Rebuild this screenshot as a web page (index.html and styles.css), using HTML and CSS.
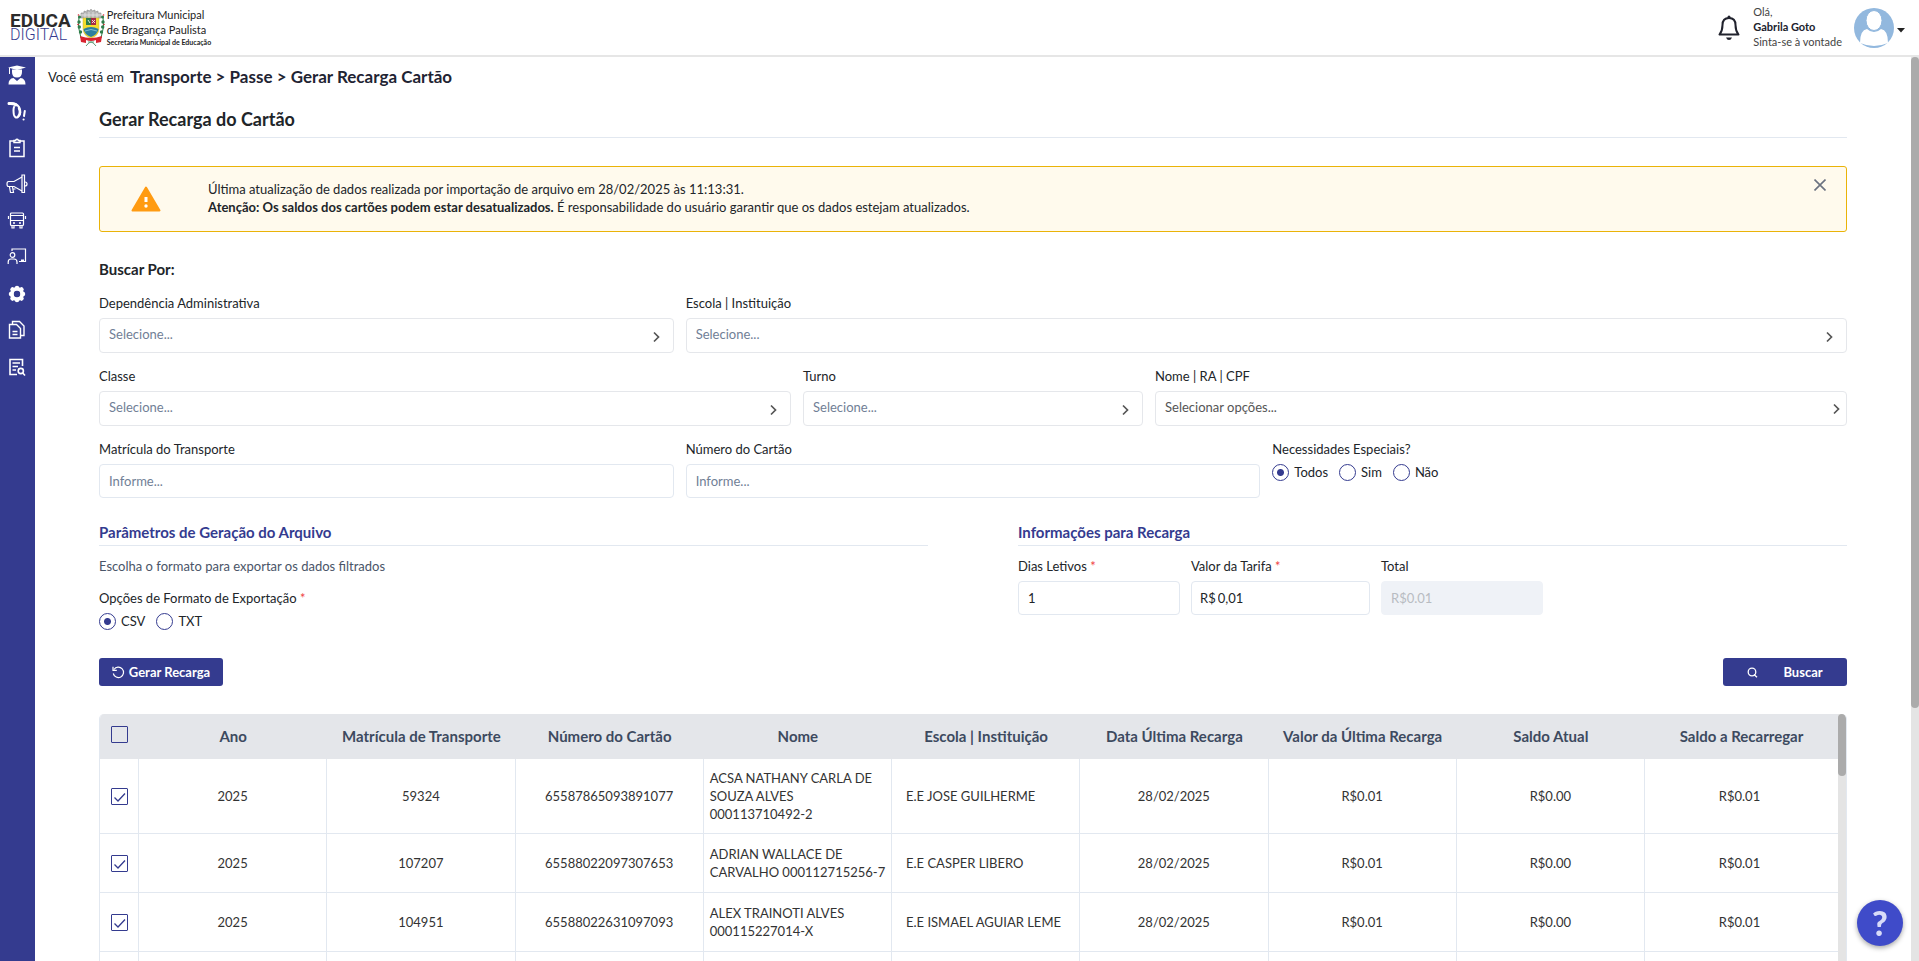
FILE: index.html
```html
<!DOCTYPE html>
<html lang="pt-BR">
<head>
  <meta charset="UTF-8">
  <title>Educa Digital - Gerar Recarga do Cartão</title>
  <meta name="viewport" content="width=device-width, initial-scale=1">
  <link rel="stylesheet" href="styles.css">
</head>
<body>
  <header class="topbar">
    <div class="brand">
      <div class="logo">
        <span class="logo-educa">EDUCA</span>
        <span class="logo-digital">DIGITAL</span>
      </div>
      <svg class="crest" width="28" height="38" viewBox="0 0 28 38" aria-hidden="true">
        <path d="M4 9 L4 4 L7 4 L7 2 L10 3 L10 1 L13 2 L14 0 L15 2 L18 1 L18 3 L21 2 L21 4 L24 4 L24 9 Z" fill="#b9b9b9" stroke="#8b8b8b" stroke-width=".6"/>
        <path d="M4 6 H24 M8 4 V9 M12 3 V9 M16 3 V9 M20 4 V9" stroke="#e4e4e4" stroke-width=".8"/>
        <path d="M2 7 Q0 18 4 29 M26 7 Q28 18 24 29" fill="none" stroke="#2f7d4a" stroke-width="1"/>
        <g fill="#2f7d4a"><circle cx="2.500" cy="8" r="1.500"/><circle cx="2" cy="13" r="1.700"/><circle cx="2.300" cy="18" r="1.700"/><circle cx="3.500" cy="23" r="1.700"/><circle cx="25.500" cy="8" r="1.500"/><circle cx="26" cy="13" r="1.700"/><circle cx="25.700" cy="18" r="1.700"/><circle cx="24.500" cy="23" r="1.700"/></g>
        <g fill="#d8232f"><circle cx="1.500" cy="6" r=".8"/><circle cx="1" cy="15.500" r=".8"/><circle cx="26.500" cy="6" r=".8"/><circle cx="27" cy="15.500" r=".8"/></g>
        <path d="M6 9 H22 V19 Q22 27 14 29 Q6 27 6 19 Z" fill="#f4dc2c" stroke="#c9b63a" stroke-width=".5"/>
        <path d="M9 9 H19 V16 H9 Z" fill="#2f7d4a"/>
        <path d="M14 9 H19 V16 H14 Z" fill="#a52a45"/>
        <path d="M11 11 l2 3 M15 11 l3 3 M18 11 l-3 3" stroke="#fff" stroke-width=".8"/>
        <path d="M6.500 20 Q14 16 21.500 20 Q21 25 14 28 Q7 25 6.500 20" fill="#2c7f9e"/>
        <path d="M8 22 Q14 19 20 22" fill="none" stroke="#7fc0d0" stroke-width="1"/>
        <path d="M3 27 Q14 31 25 27 L24 33 L19 34 L19 31 Q14 33 9 31 L9 34 L4 33 Z" fill="#d8232f"/>
        <path d="M9 37 Q12 33 14 33 Q16 33 19 37 M14 33 L11 33 M14 33 L17 33" fill="none" stroke="#5e9a77" stroke-width="1"/>
      </svg>
      <div class="brand-city">
        <span>Prefeitura Municipal</span>
        <span>de Bragança Paulista</span>
        <strong>Secretaria Municipal de Educação</strong>
      </div>
    </div>

    <div class="user">
      <button class="icon-btn" type="button" aria-label="Notificações">
        <svg width="24" height="26" viewBox="0 0 24 26">
          <path d="M12 3 C7.500 3 5.500 6 5.500 10 C5.500 15 4.500 17 2.500 19.500 H21.500 C19.500 17 18.500 15 18.500 10 C18.500 6 16.500 3 12 3 Z" fill="none" stroke="#20222d" stroke-width="2" stroke-linejoin="round"/>
          <path d="M10.500 3 V2 a1.500 1.500 0 0 1 3 0 V3 Z M9 22.500 H15 Q14 25 12 25 Q10 25 9 22.500" fill="#20222d"/>
        </svg>
      </button>
      <div class="user-text">
        <span>Olá,</span>
        <strong>Gabrila Goto</strong>
        <span>Sinta-se à vontade</span>
      </div>
      <button class="avatar-btn" type="button" aria-label="Menu do usuário">
        <svg width="40" height="40" viewBox="0 0 40 40">
          <circle cx="20" cy="20" r="20" fill="#92b8de"/>
          <path d="M6 35 Q6 22 13 21 Q16 24 20 24 Q24 24 27 21 Q34 22 34 35 Q27 38 20 38 Q13 38 6 35 Z" fill="#fff"/>
          <ellipse cx="20" cy="12.500" rx="8" ry="10" fill="#fff" stroke="#92b8de" stroke-width="1"/>
        </svg>
        <svg class="caret" width="8" height="5" viewBox="0 0 8 5"><path d="M0 0 H8 L4 4.500 Z" fill="#222"/></svg>
      </button>
    </div>
  </header>

  <div class="page">
    <nav class="sidebar" aria-label="Menu principal">
      <a href="#" aria-label="Alunos">
        <svg width="20" height="20" viewBox="0 0 20 20" fill="#fff"><path d="M10 .500 L19 2.500 L10 5 L1 2.500 Z"/><path d="M2 3 h1 v6 h-1 Z"/><path d="M5 4.500 H15 V7 Q15 12.500 10 12.500 Q5 12.500 5 7 Z"/><path d="M1.500 19.500 Q1.500 13.500 6.500 13 L10 16 L13.500 13 Q18.500 13.500 18.500 19.500 Z"/></svg>
      </a>
      <a href="#" aria-label="Avaliações">
        <svg width="20" height="20" viewBox="0 0 20 20" fill="none" stroke="#fff" stroke-linecap="round"><path d="M2 2.500 Q9 1 12 6 Q15 13 11 16 Q8 17.500 7 14 Q6 9 7 6" stroke-width="2"/><path d="M2 2.500 Q6 2 9 4" stroke-width="3"/><path d="M12 7 Q14 12 11.500 15" stroke-width="2.500"/><path d="M17.800 10 L17 15" stroke-width="2"/><path d="M16.500 18.500 h.1" stroke-width="2"/></svg>
      </a>
      <a href="#" aria-label="Registros">
        <svg width="20" height="20" viewBox="0 0 20 20" fill="none" stroke="#fff" stroke-width="1.500"><path d="M7 3 H3 V18.500 H17 V3 H13"/><path d="M7 4.500 V2.500 H8.500 Q10 .200 11.500 2.500 H13 V4.500 Z"/><path d="M7 9.500 H13 M7 13 H13"/></svg>
      </a>
      <a href="#" aria-label="Comunicados">
        <svg width="22" height="20" viewBox="0 0 22 20" fill="none" stroke="#fff" stroke-width="1.200"><path d="M16 3 L8 7.500 H2.500 Q1 7.500 1 10 Q1 12.500 2.500 12.500 H8 L16 17"/><path d="M16 1 H18.500 V18.500 H16 Z"/><path d="M19 8 Q21 8 21 10 Q21 12 19 12"/><path d="M3.500 13 L4.500 18.500 H7.500 L6.500 13 M7.500 15 H9.500"/></svg>
      </a>
      <a href="#" aria-label="Transporte">
        <svg width="20" height="18" viewBox="0 0 20 18" fill="none" stroke="#fff" stroke-width="1.200"><rect x="3.500" y="2" width="13" height="12.500" rx="1"/><path d="M3.500 4.500 H16.500 M3.500 9.500 H16.500 M1.500 5 V8 M18.500 5 V8 M5 15 V17 H7 V15 M13 15 V17 H15 V15"/><path d="M6 12 H8 M12 12 H14" stroke-width="1.600"/></svg>
      </a>
      <a href="#" aria-label="Professores">
        <svg width="20" height="18" viewBox="0 0 20 18" fill="none" stroke="#fff" stroke-width="1.200"><path d="M5 4 V2 H18.500 V14.500 H12"/><circle cx="5.500" cy="8" r="2.300"/><path d="M1.200 17 V15 Q1.200 12 4 12 H7 Q10 12 10 15 V17"/><path d="M14 13.500 H17" stroke-width="2"/></svg>
      </a>
      <a href="#" aria-label="Configurações">
        <svg width="20" height="20" viewBox="0 0 20 20"><circle cx="10" cy="10" r="5" fill="none" stroke="#fff" stroke-width="4"/><g stroke="#fff" stroke-width="4.500" stroke-linecap="round"><path d="M10 4 V4.500 M10 15.500 V16 M4 10 H4.500 M15.500 10 H16 M5.500 5.500 L6 6 M14 14 L14.500 14.500 M5.500 14.500 L6 14 M14 6 L14.500 5.500"/></g><circle cx="10" cy="10" r="3.200" fill="#343b8f"/></svg>
      </a>
      <a href="#" aria-label="Documentos">
        <svg width="20" height="20" viewBox="0 0 20 20" fill="none" stroke="#fff" stroke-width="1.400"><path d="M2.500 4.500 H9.500 L13.500 8.500 V18 H2.500 Z"/><path d="M5.500 4 V1.500 H12.500 L17 6 V15.500 H14"/><path d="M5.500 11.500 H10.500 M5.500 14.500 H10.500"/></svg>
      </a>
      <a href="#" aria-label="Relatórios">
        <svg width="20" height="20" viewBox="0 0 20 20" fill="none" stroke="#fff" stroke-width="1.600"><path d="M10 17.500 H3 V2.500 H15.500 V9"/><path d="M5.500 6 H13 M5.500 9.500 H11 M5.500 13 H9"/><circle cx="13.800" cy="14" r="2.600"/><path d="M15.800 16 L18 18.500"/></svg>
      </a>
    </nav>

    <main class="main">
      <div class="breadcrumb">
        <span>Você está em</span>
        <strong>Transporte &gt; Passe &gt; Gerar Recarga Cartão</strong>
      </div>

      <div class="content">
        <h1 class="title">Gerar Recarga do Cartão</h1>

        <div class="alert">
          <svg class="alert-icon" width="30" height="26" viewBox="0 0 30 26" aria-hidden="true">
            <path d="M15 1.500 L28.500 24.500 H1.500 Z" fill="#ff9b12" stroke="#ff9b12" stroke-width="2" stroke-linejoin="round"/>
            <path d="M15 11 V16" stroke="#fff" stroke-width="3"/><circle cx="15" cy="20" r="1.700" fill="#fff"/>
          </svg>
          <p class="alert-text">Última atualização de dados realizada por importação de arquivo em 28/02/2025 às 11:13:31.<br>
            <strong>Atenção: Os saldos dos cartões podem estar desatualizados.</strong> É responsabilidade do usuário garantir que os dados estejam atualizados.</p>
          <button class="alert-close" type="button" aria-label="Fechar">
            <svg width="12" height="12" viewBox="0 0 12 12"><path d="M.500 .500 L11.500 11.500 M11.500 .500 L.500 11.500" stroke="#6b7280" stroke-width="1.600"/></svg>
          </button>
        </div>

        <form>
          <h2 class="subtitle">Buscar Por:</h2>

          <div class="row row-3">
            <div class="field">
              <label for="dependencia">Dependência Administrativa</label>
              <select id="dependencia"><option>Selecione...</option></select>
            </div>
            <div class="field span-2">
              <label for="escola">Escola | Instituição</label>
              <select id="escola"><option>Selecione...</option></select>
            </div>
          </div>

          <div class="row row-5">
            <div class="field span-2">
              <label for="classe">Classe</label>
              <select id="classe"><option>Selecione...</option></select>
            </div>
            <div class="field">
              <label for="turno">Turno</label>
              <select id="turno"><option>Selecione...</option></select>
            </div>
            <div class="field span-2">
              <label for="nome">Nome | RA | CPF</label>
              <select id="nome" class="multi"><option>Selecionar opções...</option></select>
            </div>
          </div>

          <div class="row row-3">
            <div class="field">
              <label for="matricula">Matrícula do Transporte</label>
              <input type="text" id="matricula" placeholder="Informe...">
            </div>
            <div class="field">
              <label for="cartao">Número do Cartão</label>
              <input type="text" id="cartao" placeholder="Informe...">
            </div>
            <fieldset class="field">
              <legend>Necessidades Especiais?</legend>
              <div class="radios">
                <label><input type="radio" name="necessidades" checked>Todos</label>
                <label><input type="radio" name="necessidades">Sim</label>
                <label><input type="radio" name="necessidades">Não</label>
              </div>
            </fieldset>
          </div>

          <div class="params">
            <section>
              <h3 class="section-title">Parâmetros de Geração do Arquivo</h3>
              <p class="hint">Escolha o formato para exportar os dados filtrados</p>
              <fieldset class="field">
                <legend>Opções de Formato de Exportação <span class="req">*</span></legend>
                <div class="radios">
                  <label><input type="radio" name="formato" checked>CSV</label>
                  <label><input type="radio" name="formato">TXT</label>
                </div>
              </fieldset>
            </section>
            <section>
              <h3 class="section-title">Informações para Recarga</h3>
              <div class="recarga">
                <div class="field">
                  <label for="dias">Dias Letivos <span class="req">*</span></label>
                  <input type="text" id="dias" value="1">
                </div>
                <div class="field">
                  <label for="tarifa">Valor da Tarifa <span class="req">*</span></label>
                  <div class="money"><span>R$</span><input type="text" id="tarifa" value="0,01"></div>
                </div>
                <div class="field">
                  <label for="total">Total</label>
                  <input type="text" id="total" value="R$0.01" disabled>
                </div>
              </div>
            </section>
          </div>

          <div class="actions">
            <button class="btn" type="button">
              <svg width="13" height="13" viewBox="0 0 13 13" fill="none" stroke="#fff" stroke-width="1.200"><path d="M2 3.500 A5.200 5.200 0 1 1 1.300 7.500"/><path d="M1 .800 V4.300 H4.800"/></svg>
              Gerar Recarga
            </button>
            <button class="btn btn-search" type="submit">
              <svg width="11" height="11" viewBox="0 0 11 11" fill="none" stroke="#fff" stroke-width="1.300"><circle cx="5" cy="5" r="3.800"/><path d="M7 7.500 L10 10.300"/></svg>
              Buscar
            </button>
          </div>
        </form>

        <div class="table-box">
          <table>
            <thead>
              <tr>
                <th class="col-check"><input type="checkbox" aria-label="Selecionar todos"></th>
                <th>Ano</th>
                <th>Matrícula de Transporte</th>
                <th>Número do Cartão</th>
                <th>Nome</th>
                <th>Escola | Instituição</th>
                <th>Data Última Recarga</th>
                <th>Valor da Última Recarga</th>
                <th>Saldo Atual</th>
                <th class="col-last">Saldo a Recarregar</th>
              </tr>
            </thead>
            <tbody>
              <tr>
                <td><input type="checkbox" aria-label="Selecionar" checked></td>
                <td>2025</td>
                <td>59324</td>
                <td>65587865093891077</td>
                <td class="name">ACSA NATHANY CARLA DE SOUZA ALVES 000113710492-2</td>
                <td class="school">E.E JOSE GUILHERME</td>
                <td>28/02/2025</td>
                <td>R$0.01</td>
                <td>R$0.00</td>
                <td>R$0.01</td>
              </tr>
              <tr>
                <td><input type="checkbox" aria-label="Selecionar" checked></td>
                <td>2025</td>
                <td>107207</td>
                <td>65588022097307653</td>
                <td class="name">ADRIAN WALLACE DE CARVALHO 000112715256-7</td>
                <td class="school">E.E CASPER LIBERO</td>
                <td>28/02/2025</td>
                <td>R$0.01</td>
                <td>R$0.00</td>
                <td>R$0.01</td>
              </tr>
              <tr>
                <td><input type="checkbox" aria-label="Selecionar" checked></td>
                <td>2025</td>
                <td>104951</td>
                <td>65588022631097093</td>
                <td class="name">ALEX TRAINOTI ALVES 000115227014-X</td>
                <td class="school">E.E ISMAEL AGUIAR LEME</td>
                <td>28/02/2025</td>
                <td>R$0.01</td>
                <td>R$0.00</td>
                <td>R$0.01</td>
              </tr>
              <tr>
                <td></td><td></td><td></td><td></td><td></td><td></td><td></td><td></td><td></td><td></td>
              </tr>
            </tbody>
          </table>
          <div class="scroll table-scroll"><div class="thumb"></div></div>
        </div>
      </div>
    </main>

    <div class="scroll page-scroll"><div class="thumb"></div></div>
  </div>

  <button class="help" type="button" aria-label="Ajuda">?</button>
</body>
</html>
```
FILE: styles.css
```css
* {
  box-sizing: border-box;
}
body {
  margin: 0;
  height: 100vh;
  display: flex;
  flex-direction: column;
  overflow: hidden;
  font-family: Lato, "Liberation Sans", sans-serif;
  font-size: 13px;
  line-height: 18px;
  color: #212529;
  background: #fff;
}
h1, h2, h3, p, fieldset {
  margin: 0;
  padding: 0;
  border: 0;
  min-width: 0;
}
button, input, select {
  font: inherit;
  color: inherit;
}
button {
  border: 0;
  padding: 0;
  background: none;
  cursor: pointer;
}
svg {
  display: block;
  flex: none;
}

/* topo */
.topbar {
  flex: none;
  height: 57px;
  padding: 0 14px 0 10px;
  display: flex;
  justify-content: space-between;
  align-items: center;
  border-bottom: 2px solid #e6e6e6;
}
.brand, .user {
  display: flex;
  align-items: center;
}
.logo {
  display: flex;
  flex-direction: column;
  font-family: Roboto, sans-serif;
  margin-right: 6px;
}
.logo-educa {
  font-size: 19px;
  line-height: 15px;
  font-weight: 700;
  color: #2b2b2b;
}
.logo-digital {
  font-size: 16px;
  line-height: 14px;
  font-weight: 300;
  color: #343b8f;
}
.brand-city {
  display: flex;
  flex-direction: column;
  margin-left: 2px;
  font-size: 11px;
  line-height: 15px;
  color: #222;
}
.brand-city strong {
  font-size: 7px;
  line-height: 11px;
}
.icon-btn {
  margin-right: 12px;
}
.user-text {
  display: flex;
  flex-direction: column;
  padding-bottom: 2px;
  font-size: 11px;
  line-height: 15px;
  color: #444;
}
.user-text strong {
  color: #20222d;
}
.avatar-btn {
  display: flex;
  align-items: center;
  gap: 3px;
  margin-left: 12px;
}
.caret {
  margin-top: 6px;
}

/* estrutura */
.page {
  flex: 1;
  min-height: 0;
  display: flex;
}
.sidebar {
  flex: none;
  width: 35px;
  padding: 8px 1px 0 0;
  background: #343b8f;
  display: grid;
  grid-template-rows: repeat(4, 36px 37px);
  grid-auto-rows: 36px;
  justify-items: center;
  align-content: start;
}
.main {
  flex: 1;
  min-width: 0;
  padding-top: 10px;
  overflow: hidden;
}
.breadcrumb {
  display: flex;
  align-items: center;
  gap: 6px;
  padding-left: 13px;
  line-height: 20px;
}
.breadcrumb strong {
  font-size: 17px;
  color: #1f2433;
}
.content {
  padding: 20px 64px 0;
}
.title {
  font-size: 18px;
  line-height: 24px;
  font-weight: 700;
  padding-bottom: 6px;
  border-bottom: 1px solid #e2e8f0;
}

/* aviso */
.alert {
  margin: 28px 0 27px;
  display: flex;
  align-items: center;
  height: 66px;
  padding: 0 20px 0 31px;
  border: 1px solid #eab308;
  border-radius: 3px;
  background: #fffaed;
}
.alert-text {
  flex: 1;
  margin-left: 47px;
  padding-bottom: 2px;
}
.alert-close {
  align-self: flex-start;
  margin-top: 12px;
}

/* formulario */
.subtitle {
  font-size: 15px;
  line-height: 20px;
  margin-bottom: 15px;
}
.row {
  display: grid;
  gap: 12px;
  margin-bottom: 14px;
}
.row-3 {
  grid-template-columns: repeat(3, minmax(0, 1fr));
}
.row-5 {
  grid-template-columns: repeat(5, minmax(0, 1fr));
}
.span-2 {
  grid-column: span 2;
}
.field > label, legend {
  display: block;
  padding: 0;
  margin-bottom: 6px;
}
input[type="text"], select, .money {
  display: block;
  width: 100%;
  height: 34px;
  padding: 0 9px;
  border: 1px solid #e2e8f0;
  border-radius: 4px;
  background-color: #fff;
}
select {
  appearance: none;
  height: 35px;
  padding-bottom: 3px;
  border-color: #e5e7eb;
  color: #718096;
  background-image: url("data:image/svg+xml,%3Csvg xmlns='http://www.w3.org/2000/svg' width='7' height='12' fill='none' stroke='%23555' stroke-width='1.700'%3E%3Cpath d='M1 1.500L5.500 6L1 10.500'/%3E%3C/svg%3E");
  background-repeat: no-repeat;
  background-position: right 13px top 12px;
}
select.multi {
  color: #555;
  background-position: right 6px top 11px;
}
input::placeholder {
  color: #718096;
  opacity: 1;
}
input:disabled {
  background-color: #eff2f7;
  border-color: #eff2f7;
  color: #b8bcc2;
}
.radios {
  display: flex;
  gap: 11px;
  line-height: 17px;
}
.radios label {
  display: flex;
  align-items: center;
  gap: 5px;
}
input[type="radio"], input[type="checkbox"] {
  appearance: none;
  flex: none;
  width: 17px;
  height: 17px;
  margin: 0;
  border: 1px solid #343b8f;
  background-color: #fff;
}
input[type="radio"] {
  border-radius: 50%;
}
input[type="radio"]:checked {
  background-image: radial-gradient(circle, #343b8f 3px, transparent 4px);
}
.req {
  color: #ef4444;
}
.params {
  display: grid;
  grid-template-columns: 1fr 1fr;
  column-gap: 90px;
  margin-top: 23px;
}
.section-title {
  font-size: 15px;
  line-height: 22px;
  color: #343b8f;
  padding-bottom: 2px;
  margin-bottom: 11px;
  border-bottom: 1px solid #e2e8f0;
}
.hint {
  color: #4a5568;
  margin-bottom: 14px;
}
.recarga {
  display: grid;
  grid-template-columns: 162px 179px 162px;
  gap: 11px;
}
.money {
  display: flex;
  align-items: center;
  gap: 2px;
  padding: 0 8px;
}
.money input[type="text"] {
  flex: 1;
  min-width: 0;
  height: 30px;
  padding: 0;
  border: 0;
}
.actions {
  display: flex;
  justify-content: space-between;
  margin: 28px 0;
}
.btn {
  display: flex;
  align-items: center;
  justify-content: center;
  gap: 4px;
  height: 28px;
  min-width: 124px;
  padding: 0 12px;
  border-radius: 3px;
  background: #343b8f;
  color: #fff;
  font-weight: 700;
}
.btn-search {
  gap: 25px;
}

/* tabela */
.table-box {
  display: flex;
  height: 520px;
  overflow: hidden;
  border: 1px solid #e2e8f0;
  border-top: 0;
  border-radius: 5px;
}
table {
  flex: 1;
  align-self: flex-start;
  table-layout: fixed;
  width: 100%;
  border-collapse: separate;
  border-spacing: 0;
}
th {
  height: 45px;
  padding: 0 0 2px;
  background: #e4e6ea;
  color: #3d4a5f;
  font-size: 15px;
}
.col-check {
  width: 39px;
  padding-bottom: 4px;
}
.col-last {
  width: 193px;
}
td {
  height: 59px;
  padding: 10px 0;
  text-align: center;
  color: #333;
  border-bottom: 1px solid #e2e8f0;
  border-right: 1px solid #e2e8f0;
}
td:last-child {
  padding-right: 4px;
  border-right: 0;
}
td.name {
  text-align: left;
  padding-left: 6px;
}
td.school {
  text-align: left;
  padding-left: 14px;
}
input[type="checkbox"] {
  display: block;
  margin: 0 auto;
  border-radius: 1px;
}
th input[type="checkbox"] {
  background-color: transparent;
}
input[type="checkbox"]:checked {
  background-image: url("data:image/svg+xml,%3Csvg xmlns='http://www.w3.org/2000/svg' width='15' height='15' fill='none' stroke='%23343b8f' stroke-width='1.300'%3E%3Cpath d='M2.500 8.500L6 12L13 4.500'/%3E%3C/svg%3E");
}

/* barras de rolagem */
.scroll {
  flex: none;
  width: 8px;
  background: #e4e4e4;
}
.thumb {
  border-radius: 4px;
  background: #ababab;
}
.page-scroll .thumb {
  height: 72%;
}
.table-scroll .thumb {
  height: 12%;
}

.help {
  position: fixed;
  right: 16px;
  bottom: 15px;
  width: 46px;
  height: 46px;
  border-radius: 50%;
  background: #3f4bc9;
  color: #d8dbf8;
  font-size: 34px;
  line-height: 46px;
  font-weight: 900;
  box-shadow: 0 2px 5px rgba(0, 0, 0, 0.35);
}
```
